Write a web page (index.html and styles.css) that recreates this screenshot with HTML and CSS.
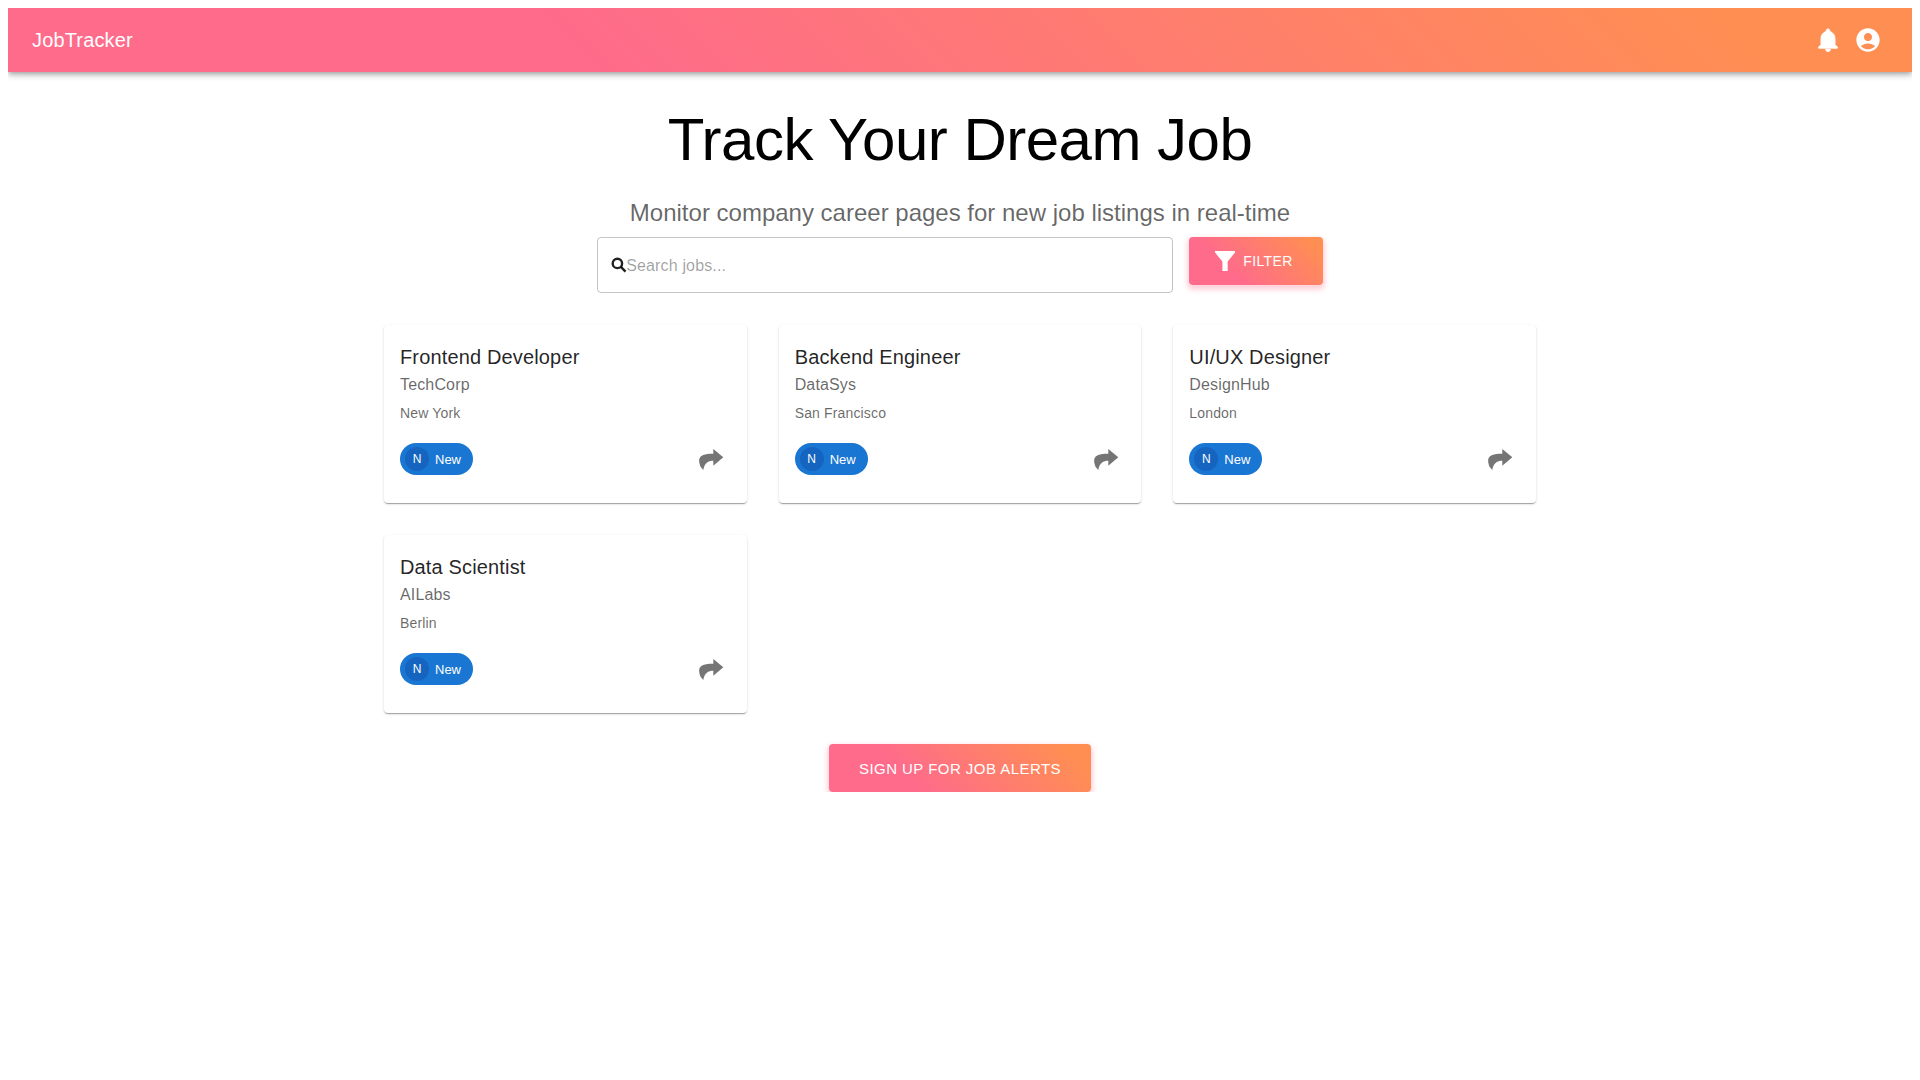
FILE: index.html
```html
<!DOCTYPE html>
<html lang="en">
<head>
    <meta charset="UTF-8">
    <title>JobTracker</title>
    <link rel="stylesheet" href="styles.css">
</head>
<body>
    <header class="app-bar">
        <div class="brand">JobTracker</div>
        <div class="bar-icons">
            <button class="icon-btn white">
                <svg class="bell" viewBox="0 0 24 24"><path d="M12 22c1.1 0 2-.9 2-2h-4c0 1.1.89 2 2 2zm6-6v-5c0-3.07-1.64-5.64-4.5-6.32V4c0-.83-.67-1.5-1.5-1.5s-1.5.67-1.5 1.5v.68C7.63 5.36 6 7.92 6 11v5l-2 2v1h16v-1l-2-2z"/></svg>
            </button>
            <button class="icon-btn white">
                <svg viewBox="0 0 24 24"><path d="M12 2C6.48 2 2 6.48 2 12s4.48 10 10 10 10-4.48 10-10S17.52 2 12 2zm0 4c1.93 0 3.5 1.57 3.5 3.5S13.93 13 12 13s-3.5-1.57-3.5-3.5S10.07 6 12 6zm0 14c-2.03 0-4.43-.82-6.14-2.88C7.55 15.8 9.68 15 12 15s4.45.8 6.14 2.12C16.43 19.18 14.03 20 12 20z"/></svg>
            </button>
        </div>
    </header>

    <main class="container">
        <h1 class="hero-title">Track Your Dream Job</h1>
        <h2 class="hero-sub">Monitor company career pages for new job listings in real-time</h2>

        <div class="search-row">
            <label class="search-box">
                <svg class="search-icon" viewBox="0 0 16 16"><circle cx="6.4" cy="6.4" r="4.7"/><path d="M9.9 9.9l4.6 4.8"/></svg>
                <input type="text" placeholder="Search jobs...">
            </label>
            <button class="grad-btn filter-btn">
                <svg viewBox="0 0 20 20"><path d="M0 0h20v1.5l-7.3 9V20H7.4v-9.5L0 1.5z"/></svg>
                Filter
            </button>
        </div>

        <div class="job-grid">
            <article class="job-card">
                <h3>Frontend Developer</h3>
                <p class="company">TechCorp</p>
                <p class="location">New York</p>
                <div class="card-foot">
                    <span class="chip"><span class="chip-avatar">N</span><span class="chip-label">New</span></span>
                    <button class="icon-btn grey"><svg viewBox="0 0 25 21"><path d="M14.3 0l10 8.3-10 8.4v-5c-5 0-8.8 2-10 9.3l-2.8-3.3C-.3 13-.5 9.5 2 7.2c2.5-2 7-2.5 12.3-2.5z"/></svg></button>
                </div>
            </article>
            <article class="job-card">
                <h3>Backend Engineer</h3>
                <p class="company">DataSys</p>
                <p class="location">San Francisco</p>
                <div class="card-foot">
                    <span class="chip"><span class="chip-avatar">N</span><span class="chip-label">New</span></span>
                    <button class="icon-btn grey"><svg viewBox="0 0 25 21"><path d="M14.3 0l10 8.3-10 8.4v-5c-5 0-8.8 2-10 9.3l-2.8-3.3C-.3 13-.5 9.5 2 7.2c2.5-2 7-2.5 12.3-2.5z"/></svg></button>
                </div>
            </article>
            <article class="job-card">
                <h3>UI/UX Designer</h3>
                <p class="company">DesignHub</p>
                <p class="location">London</p>
                <div class="card-foot">
                    <span class="chip"><span class="chip-avatar">N</span><span class="chip-label">New</span></span>
                    <button class="icon-btn grey"><svg viewBox="0 0 25 21"><path d="M14.3 0l10 8.3-10 8.4v-5c-5 0-8.8 2-10 9.3l-2.8-3.3C-.3 13-.5 9.5 2 7.2c2.5-2 7-2.5 12.3-2.5z"/></svg></button>
                </div>
            </article>
            <article class="job-card">
                <h3>Data Scientist</h3>
                <p class="company">AILabs</p>
                <p class="location">Berlin</p>
                <div class="card-foot">
                    <span class="chip"><span class="chip-avatar">N</span><span class="chip-label">New</span></span>
                    <button class="icon-btn grey"><svg viewBox="0 0 25 21"><path d="M14.3 0l10 8.3-10 8.4v-5c-5 0-8.8 2-10 9.3l-2.8-3.3C-.3 13-.5 9.5 2 7.2c2.5-2 7-2.5 12.3-2.5z"/></svg></button>
                </div>
            </article>
        </div>

        <div class="alerts-row">
            <button class="grad-btn">Sign up for job alerts</button>
        </div>
    </main>
</body>
</html>
```

FILE: styles.css
```css
body {
    font-family: "Liberation Sans", Arial, sans-serif;
    background: #fff;
    color: rgba(0, 0, 0, 0.87);
}
button {
    font-family: inherit;
}
.app-bar {
    display: flex;
    align-items: center;
    justify-content: space-between;
    height: 64px;
    padding: 0 24px;
    color: #fff;
    background: linear-gradient(45deg, #fe6b8b 30%, #ff8e53 90%);
    box-shadow: 0 2px 4px -1px rgba(0, 0, 0, 0.2), 0 4px 5px 0 rgba(0, 0, 0, 0.14), 0 1px 10px 0 rgba(0, 0, 0, 0.12);
}
.brand {
    font-size: 20px;
    line-height: 32px;
    letter-spacing: 0.15px;
}
.bar-icons {
    display: flex;
}
.icon-btn {
    display: flex;
    align-items: center;
    justify-content: center;
    width: 40px;
    height: 40px;
    padding: 0;
    border: 0;
    background: none;
}
.icon-btn svg {
    flex: none;
    fill: currentColor;
}
.icon-btn.white {
    color: #fff;
}
.icon-btn.white svg {
    width: 28px;
    height: 28px;
}
.icon-btn .bell {
    stroke: currentColor;
    stroke-width: 0.8;
}
.icon-btn.grey {
    padding-left: 2px;
    color: rgba(0, 0, 0, 0.54);
}
.icon-btn.grey svg {
    width: 25px;
    height: 21px;
}
.container {
    width: 1152px;
    margin: 32px auto 0;
    text-align: center;
}
.hero-title {
    margin: 0 0 21px;
    font-size: 60px;
    font-weight: 400;
    line-height: 72px;
    letter-spacing: -0.5px;
    color: #000;
}
.hero-sub {
    margin: 0 0 8px;
    font-size: 24px;
    font-weight: 400;
    line-height: 32px;
    color: rgba(0, 0, 0, 0.6);
}
.search-row {
    display: flex;
    justify-content: center;
    align-items: flex-start;
    gap: 16px;
    margin-bottom: 32px;
}
.search-box {
    display: flex;
    align-items: center;
    box-sizing: border-box;
    width: 576px;
    height: 56px;
    padding: 0 14px 0 13px;
    border: 1px solid rgba(0, 0, 0, 0.23);
    border-radius: 4px;
}
.search-icon {
    flex: none;
    width: 16px;
    height: 16px;
    margin-right: -1px;
    fill: none;
    stroke: rgba(0, 0, 0, 0.87);
    stroke-width: 2.4;
}
.search-box input {
    flex: 1;
    min-width: 0;
    height: 24px;
    padding: 2px 0 0;
    border: 0;
    outline: 0;
    background: none;
    font: 16px "Liberation Sans", Arial, sans-serif;
    letter-spacing: 0.15px;
    color: rgba(0, 0, 0, 0.87);
}
.search-box input::placeholder {
    color: rgba(0, 0, 0, 0.38);
    opacity: 1;
}
.grad-btn {
    display: inline-flex;
    align-items: center;
    justify-content: center;
    height: 48px;
    padding: 0 30px;
    border: 0;
    border-radius: 4px;
    font-size: 15px;
    font-weight: 400;
    letter-spacing: 0.46px;
    text-transform: uppercase;
    color: #fff;
    background: linear-gradient(45deg, #fe6b8b 30%, #ff8e53 90%);
    box-shadow: 0 3px 5px 2px rgba(255, 105, 135, 0.3);
}
.filter-btn {
    font-size: 14px;
    letter-spacing: 0.4px;
}
.filter-btn svg {
    width: 20px;
    height: 20px;
    margin: 0 8px 0 -4px;
    fill: #fff;
}
.job-grid {
    display: grid;
    grid-template-columns: repeat(3, 1fr);
    gap: 32px;
    text-align: left;
}
.job-card {
    box-sizing: border-box;
    padding: 16px 16px 24px;
    border-radius: 4px;
    background: #fff;
    box-shadow: 0 2px 1px -1px rgba(0, 0, 0, 0.2), 0 1px 1px 0 rgba(0, 0, 0, 0.14), 0 1px 3px 0 rgba(0, 0, 0, 0.12);
}
.job-card h3 {
    margin: 0;
    font-size: 20px;
    font-weight: 400;
    line-height: 32px;
    letter-spacing: 0.15px;
}
.company {
    margin: 0 0 6px;
    font-size: 16px;
    line-height: 24px;
    letter-spacing: 0.15px;
    color: rgba(0, 0, 0, 0.6);
}
.location {
    margin: 0 0 16px;
    font-size: 14px;
    line-height: 20px;
    letter-spacing: 0.15px;
    color: rgba(0, 0, 0, 0.6);
}
.card-foot {
    display: flex;
    align-items: center;
    justify-content: space-between;
}
.chip {
    display: inline-flex;
    align-items: center;
    height: 32px;
    border-radius: 16px;
    font-size: 13px;
    color: #fff;
    background: #1976d2;
}
.chip-avatar {
    display: flex;
    align-items: center;
    justify-content: center;
    width: 24px;
    height: 24px;
    margin-left: 5px;
    margin-right: -6px;
    border-radius: 50%;
    font-size: 12px;
    background: #1565c0;
}
.chip-label {
    padding: 0 12px;
}
.alerts-row {
    margin-top: 31px;
}
```
